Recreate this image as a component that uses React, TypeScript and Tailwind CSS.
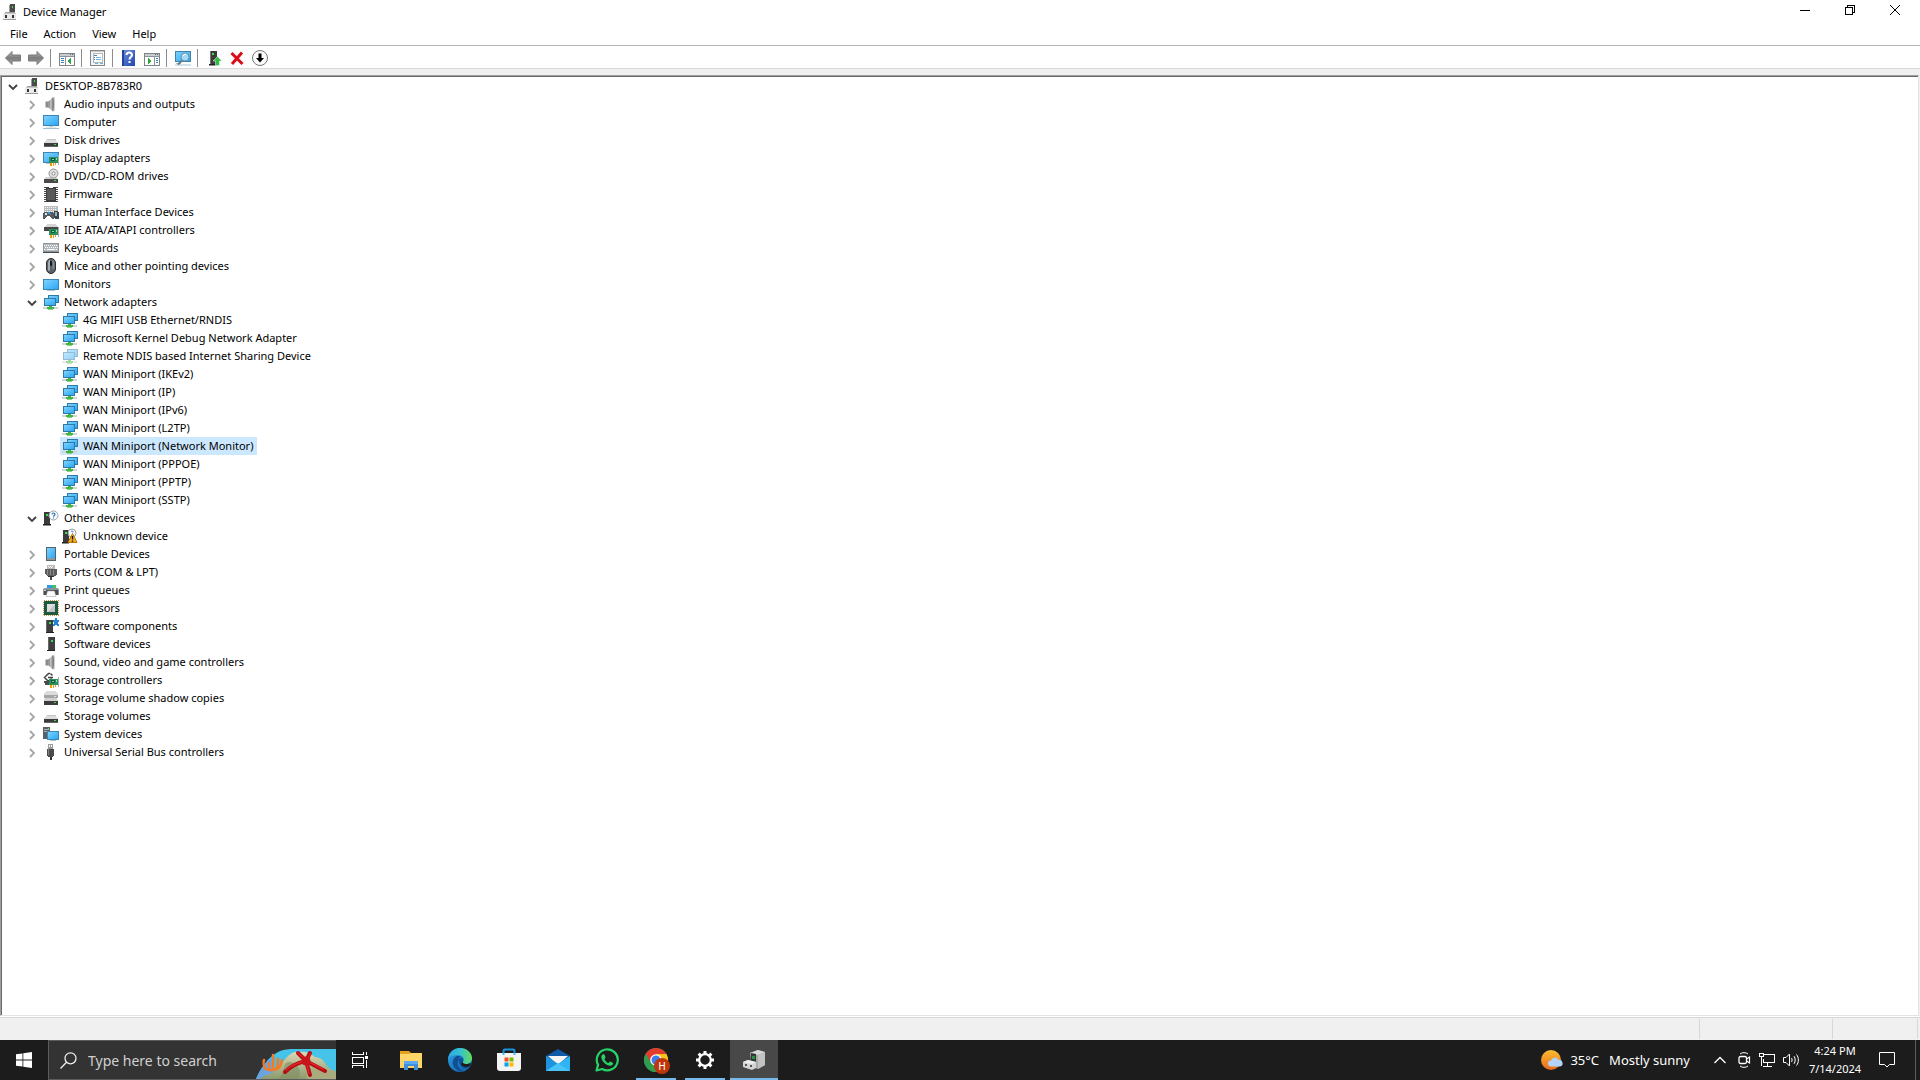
import React from 'react';

type IconProps = { children: React.ReactNode; size?: number; crisp?: boolean };

const Icon: React.FC<IconProps> = ({ children, size = 16, crisp }) => (
	<svg
		width={size}
		height={size}
		viewBox={`0 0 ${size} ${size}`}
		fill="none"
		shapeRendering={crisp ? 'crispEdges' : 'auto'}
		className="block shrink-0"
		aria-hidden="true"
	>
		{children}
	</svg>
);

/* Shared gradients, referenced by id from every icon */
const Gradients: React.FC = () => (
	<svg width="0" height="0" className="absolute" aria-hidden="true">
		<defs>
			<linearGradient id="screen" x1="0" y1="0" x2="1" y2="1">
				<stop offset="0" stopColor="#7fd2fe" />
				<stop offset="1" stopColor="#2ba8f5" />
			</linearGradient>
			<linearGradient id="metal" x1="0" y1="0" x2="1" y2="0">
				<stop offset="0" stopColor="#6f6f6f" />
				<stop offset="0.5" stopColor="#c9c9c9" />
				<stop offset="1" stopColor="#7a7a7a" />
			</linearGradient>
			<linearGradient id="arrow" x1="0" y1="0" x2="0" y2="1">
				<stop offset="0" stopColor="#b9b9b9" />
				<stop offset="0.5" stopColor="#7c7c7c" />
				<stop offset="1" stopColor="#a8a8a8" />
			</linearGradient>
			<linearGradient id="help" x1="0" y1="0" x2="1" y2="1">
				<stop offset="0" stopColor="#7090dc" />
				<stop offset="1" stopColor="#2347ad" />
			</linearGradient>
			<linearGradient id="edgeTop" x1="0" y1="0" x2="1" y2="0">
				<stop offset="0" stopColor="#2da6e0" />
				<stop offset="0.5" stopColor="#35c1d4" />
				<stop offset="1" stopColor="#66dc5c" />
			</linearGradient>
			<linearGradient id="edgeBody" x1="0" y1="0" x2="1" y2="1">
				<stop offset="0" stopColor="#2ea3e6" />
				<stop offset="1" stopColor="#0c59a4" />
			</linearGradient>
			<linearGradient id="sun" x1="0" y1="0" x2="0" y2="1">
				<stop offset="0" stopColor="#f9bd2f" />
				<stop offset="1" stopColor="#ea6a1f" />
			</linearGradient>
			<linearGradient id="rock" x1="0" y1="0" x2="0" y2="1">
				<stop offset="0" stopColor="#dcd9b4" />
				<stop offset="1" stopColor="#8d9a6c" />
			</linearGradient>
		</defs>
	</svg>
);

const Card: React.FC = () => (
	<>
		<rect x="6" y="7" width="9" height="6" fill="#2c8f5c" />
		<rect x="8" y="8" width="4" height="3" fill="#0f5a3b" />
		<rect x="9" y="9" width="2" height="1" fill="#7fd9a2" />
		<rect x="13" y="8" width="1" height="2" fill="#8fe6ae" />
		<rect x="15" y="5" width="1" height="10" fill="#a3adb2" />
		<path d="M7 13h2v3H7zM10 13h1v3h-1zM12 13h1v2h-1z" fill="#f09a1a" />
	</>
);

const Drive: React.FC = () => (
	<>
		<path d="M4 7h8l3 4H1z" fill="#dcdcdc" />
		<path d="M4 7h8l1 1H3z" fill="#c4c4c4" />
		<rect x="1" y="11" width="14" height="4" fill="#3c3c3c" />
		<rect x="1" y="14" width="14" height="1" fill="#666" />
		<rect x="11" y="12" width="2" height="1" fill="#35e045" />
	</>
);

const Tower: React.FC<{ x: number }> = ({ x }) => (
	<>
		<rect x={x} y="2" width="7" height="12" fill="#3f3f3f" />
		<rect x={x} y="2" width="1" height="12" fill="#686868" />
		<rect x={x + 3} y="4" width="2" height="2" fill="#36e14b" />
		<rect x={x} y="14" width="8" height="1" fill="#222" />
	</>
);

const DeviceManagerIcon = () => (
	<Icon crisp>
		<rect x="7" y="0" width="5" height="8" fill="#4a4a4a" />
		<rect x="6" y="1" width="1" height="7" fill="#9b9b9b" />
		<rect x="9" y="2" width="1" height="2" fill="#3fe052" />
		<path d="M2 8h10l1 2v6H0v-6z" fill="#c6c6c6" />
		<path d="M0 10h13v5H0z" fill="#ececec" />
		<path d="M2 11h2v3H2zM9 11h2v3H9z" fill="#333" />
		<path d="M0 15h13v1H0z" fill="#9b9b9b" />
		<path d="M2 8h10v1H2z" fill="#a2a2a2" />
	</Icon>
);

const SpeakerIcon = () => (
	<Icon>
		<path d="M2.500 5.500h3v6h-3z" fill="#8b8b8b" />
		<path d="M5.500 5.500L10 1v14.500l-4.500-4z" fill="url(#metal)" />
		<path d="M10 1c1.500 2 1.500 12 0 14.500z" fill="#5f5f5f" />
		<path d="M10.500 1l1 .5v13.500l-1 .5z" fill="#a7a7a7" />
	</Icon>
);

const ComputerIcon = () => (
	<Icon crisp>
		<rect x="0" y="1" width="16" height="11" fill="#3c86b4" />
		<rect x="1" y="2" width="14" height="9" fill="url(#screen)" />
		<rect x="6" y="12" width="4" height="1" fill="#c3d3dc" />
		<rect x="3" y="13" width="10" height="1" fill="#e3eaee" />
		<rect x="0" y="14" width="16" height="1" fill="#a3c0d0" />
	</Icon>
);

const DiskIcon = () => (
	<Icon crisp>
		<Drive />
	</Icon>
);

const DisplayIcon = () => (
	<Icon crisp>
		<rect x="0" y="2" width="16" height="11" fill="#3c86b4" />
		<rect x="1" y="3" width="14" height="9" fill="url(#screen)" />
		<rect x="3" y="13" width="4" height="1" fill="#b7c7cf" />
		<Card />
	</Icon>
);

const DvdIcon = () => (
	<Icon>
		<path d="M3 9h10l2 2.500H1z" fill="#d0d0d0" />
		<rect x="1" y="11" width="14" height="4" fill="#4a4a4a" />
		<rect x="11" y="12" width="2" height="1" fill="#35e045" />
		<circle cx="10.500" cy="5.500" r="4.500" fill="#dedede" stroke="#949494" />
		<circle cx="10.500" cy="5.500" r="1.500" fill="#fff" stroke="#8e8e8e" />
	</Icon>
);

const FirmwareIcon = () => (
	<Icon crisp>
		<rect x="3" y="1" width="10" height="15" fill="#3e3e3e" />
		<rect x="4" y="3" width="8" height="11" fill="#595959" />
		<rect x="6" y="1" width="4" height="1" fill="#fff" />
		<path d="M1 1.500h2M1 3.500h2M1 5.500h2M1 7.500h2M1 9.500h2M1 11.500h2M1 13.500h2M1 15.500h2" stroke="#4a4a4a" />
		<path d="M13 1.500h2M13 3.500h2M13 5.500h2M13 7.500h2M13 9.500h2M13 11.500h2M13 13.500h2M13 15.500h2" stroke="#4a4a4a" />
	</Icon>
);

const HidIcon = () => (
	<Icon crisp>
		<rect x="1" y="2" width="14" height="8" fill="#b9bdbf" />
		<path d="M2 3.500h12M2 5.500h12M2 7.500h12" stroke="#f6f6f6" strokeDasharray="1 1" />
		<path d="M1 8h8l2 1v6H9l-2-3H4l-2 3H0v-4z" fill="#545c63" />
		<path d="M2 9h2v2H2z" fill="#d9e6ec" />
		<path d="M5 8h2v2H5z" fill="#2c9ae6" />
		<path d="M7 10h1v1H7z" fill="#e25b3c" />
		<path d="M11 7h4l1 2v5l-1 1h-3l-1-1z" fill="#3b4650" />
		<path d="M12 8h2v4h-2z" fill="#9eb0bb" />
	</Icon>
);

const IdeIcon = () => (
	<Icon crisp>
		<path d="M4 2h8l3 3H1z" fill="#d5d5d5" />
		<rect x="1" y="5" width="14" height="4" fill="#474747" />
		<Card />
	</Icon>
);

const KeyboardIcon = () => (
	<Icon crisp>
		<rect x="0" y="3" width="16" height="10" fill="#8e979c" />
		<rect x="1" y="4" width="14" height="7" fill="#b4bbbf" />
		<path d="M1 5.500h14M2 7.500h13M1 9.500h2M13 9.500h2" stroke="#fff" strokeDasharray="1 1" />
		<path d="M4 9.500h8" stroke="#fff" />
		<rect x="0" y="12" width="16" height="1" fill="#454b4f" />
	</Icon>
);

const MouseIcon = () => (
	<Icon>
		<rect x="3.500" y="0.500" width="9" height="15" rx="4.500" fill="#5c6167" stroke="#2c2f33" />
		<path d="M5 6c0-3 1-4 2-4.500v11H5z" fill="#a3adb5" />
		<path d="M9.500 1.500c1.500 1 2 2 2 5v4l-2 1z" fill="#7f8990" />
		<rect x="7" y="3" width="2" height="5" rx="1" fill="#17191b" />
	</Icon>
);

const MonitorIcon = () => (
	<Icon crisp>
		<rect x="0" y="3" width="16" height="11" fill="#3c86b4" />
		<rect x="1" y="4" width="14" height="9" fill="url(#screen)" />
		<rect x="4" y="14" width="8" height="1" fill="#a9c3d1" />
	</Icon>
);

const NetworkIcon = () => (
	<Icon crisp>
		<rect x="5" y="1" width="11" height="8" fill="#2f79a8" />
		<rect x="6" y="2" width="9" height="6" fill="url(#screen)" />
		<rect x="1" y="4" width="12" height="8" fill="#2f79a8" />
		<rect x="2" y="5" width="10" height="6" fill="url(#screen)" />
		<rect x="0" y="13" width="15" height="2" fill="#d4d4d4" />
		<path d="M6 12h3v1h2v2H4v-2h2z" fill="#3fb544" />
		<rect x="5" y="15" width="5" height="1" fill="#8fd08f" />
	</Icon>
);

const OtherIcon = () => (
	<Icon>
		<path d="M1 2h6v12H1z" fill="#3b3b3b" />
		<path d="M1 14h7v1.500H0V14z" fill="#222" />
		<rect x="3" y="4" width="2" height="2" fill="#36e14b" />
		<circle cx="10.500" cy="5.500" r="4.500" fill="#fff" stroke="#9aa3a8" />
		<path d="M9 4.500c0-2 3-2 3 0 0 1-1.500 1-1.500 2.200M10.500 7.500v1" stroke="#2277c4" strokeWidth="1.200" />
	</Icon>
);

const UnknownIcon = () => (
	<Icon>
		<path d="M1 2h6v12H1z" fill="#3b3b3b" />
		<path d="M0 14h7v1.500H0z" fill="#222" />
		<rect x="3" y="4" width="2" height="2" fill="#36e14b" />
		<circle cx="10" cy="5" r="4" fill="#fff" stroke="#9aa3a8" />
		<path d="M9 3.500c1-1 2.500-.5 2 1" stroke="#2277c4" />
		<path d="M10.500 5.500L15 14.500H6z" fill="#f6ae22" stroke="#b57708" strokeLinejoin="round" />
		<path d="M10.500 8v3.500M10.500 12.500v1.200" stroke="#1f1500" strokeWidth="1.400" />
	</Icon>
);

const PortableIcon = () => (
	<Icon crisp>
		<rect x="3" y="1" width="10" height="14" fill="#55636c" />
		<rect x="4" y="2" width="8" height="10" fill="url(#screen)" />
		<rect x="4" y="12" width="8" height="2" fill="#8d979c" />
	</Icon>
);

const PortsIcon = () => (
	<Icon crisp>
		<path d="M4 1h8v4H4z" fill="#b9b9b9" />
		<path d="M5 2h1v1H5zM7 2h1v1H7zM9 2h1v1H9zM6 3h1v1H6zM8 3h1v1H8z" fill="#fff" />
		<path d="M2 5h12v5l-2 2H4l-2-2z" fill="#5d5d5d" />
		<path d="M4 6h1v5H4zM7 6h1v5H7zM10 6h1v5h-1z" fill="#8d8d8d" />
		<path d="M5 12h6v1H5z" fill="#2e2e2e" />
		<path d="M7 13h2v3H7z" fill="#4a4a4a" />
	</Icon>
);

const PrintIcon = () => (
	<Icon>
		<path d="M4 3h9v3H4z" fill="#2f9be6" />
		<path d="M9 3h4v3H9z" fill="#42bd69" />
		<path d="M2 6h12l2 1v6H0V7z" fill="#8b9399" />
		<path d="M1 8h14v5H1z" fill="#474d52" />
		<path d="M1 8h2v1H1z" fill="#cfd6da" />
		<path d="M4.500 9h7l1.500 5.500H3z" fill="#fafafa" stroke="#a0a0a0" strokeWidth="0.500" />
	</Icon>
);

const ProcessorIcon = () => (
	<Icon crisp>
		<rect x="0.500" y="0.500" width="15" height="15" stroke="#c09a3c" strokeDasharray="1 1" />
		<rect x="1" y="1" width="14" height="14" fill="#1d5a41" />
		<rect x="4" y="4" width="8" height="8" fill="#dedede" />
		<path d="M4 12l8-8v8z" fill="#c3c3c3" />
	</Icon>
);

const SoftwareComponentIcon = () => (
	<Icon crisp>
		<Tower x={3} />
		<path d="M10 2h2V0h2v2h2v2h-1v2h1v2h-2V7h-2v1h-2V6h1V4h-1z" fill="#2285d6" />
	</Icon>
);

const SoftwareDeviceIcon = () => (
	<Icon crisp>
		<rect x="5" y="1" width="7" height="13" fill="#3f3f3f" />
		<rect x="5" y="1" width="1" height="13" fill="#686868" />
		<rect x="8" y="4" width="2" height="2" fill="#36e14b" />
		<rect x="4" y="14" width="8" height="1" fill="#222" />
	</Icon>
);

const StorageControllerIcon = () => (
	<Icon crisp>
		<path d="M1 9h6v4H2z" fill="#4c4c4c" />
		<path d="M7 1.500H5.500L1.500 5.500l4 4 3-3M5 5.500h5M7.500 1.500l2 2" stroke="#444" strokeWidth="1.500" shapeRendering="auto" />
		<Card />
	</Icon>
);

const ShadowCopyIcon = () => (
	<Icon crisp>
		<path d="M3 1h10l2 3v3H1V4z" fill="#dcdcdc" />
		<path d="M1 5h14v3H1z" fill="#a6a6a6" />
		<path d="M2 8h12l1 3H1z" fill="#d0d0d0" />
		<rect x="1" y="11" width="14" height="4" fill="#3c3c3c" />
		<rect x="11" y="12" width="2" height="1" fill="#35e045" />
		<rect x="11" y="6" width="2" height="1" fill="#c3ecc7" />
	</Icon>
);

const SystemIcon = () => (
	<Icon crisp>
		<rect x="0" y="1" width="7" height="12" fill="#5a6166" />
		<path d="M1 3h5v1H1zM1 5h3v1H1z" fill="#aab2b7" />
		<rect x="5" y="2" width="1" height="1" fill="#36e14b" />
		<rect x="4" y="5" width="12" height="9" fill="#3c86b4" />
		<rect x="5" y="6" width="10" height="7" fill="url(#screen)" />
		<rect x="7" y="14" width="6" height="1" fill="#a9c3d1" />
	</Icon>
);

const UsbIcon = () => (
	<Icon crisp>
		<rect x="5" y="0" width="5" height="5" fill="#9b9b9b" />
		<path d="M6 1h1v2H6zM8 1h1v2H8z" fill="#fff" />
		<path d="M4 5h7v6l-1 2H5l-1-2z" fill="#4b4b4b" />
		<path d="M5 5h1v6H5z" fill="#838383" />
		<path d="M7 13h2v3H7z" fill="#2f2f2f" />
	</Icon>
);

/* Toolbar icons */
const BackIcon = () => (
	<Icon>
		<path d="M0.500 8L7 1.500V5h8.500v6H7v3.500z" fill="url(#arrow)" stroke="#777" strokeLinejoin="round" />
	</Icon>
);

const ForwardIcon = () => (
	<Icon>
		<path d="M15.500 8L9 1.500V5H.5v6H9v3.500z" fill="url(#arrow)" stroke="#777" strokeLinejoin="round" />
	</Icon>
);

const PaneIcon: React.FC<{ right?: boolean }> = ({ right }) => (
	<Icon crisp>
		<rect x="0.500" y="3.500" width="15" height="12" fill="#fff" stroke="#7d858b" />
		<rect x="1" y="4" width="14" height="2" fill="#c8cdd1" />
		<path d="M11 4h1v1h-1zM13 4h1v1h-1z" fill="#5a6268" />
		<path d="M1 6.500h14" stroke="#8b9298" />
		{right ? (
			<>
				<path d="M10.500 7v8" stroke="#8b9298" />
				<path d="M12 8.500h2M12 10.500h2M12 12.500h2" stroke="#3d7fb4" />
				<path d="M4 8l4 3-4 3z" fill="#30a63a" />
			</>
		) : (
			<>
				<path d="M6.500 7v8" stroke="#8b9298" />
				<path d="M2 8.500h3M2 10.500h3M2 12.500h3" stroke="#3d7fb4" />
				<path d="M12 8l-4 3 4 3z" fill="#30a63a" />
			</>
		)}
	</Icon>
);

const PropertiesIcon = () => (
	<Icon crisp>
		<rect x="0.500" y="0.500" width="14" height="15" fill="#f4f4f4" stroke="#858585" />
		<rect x="1" y="1" width="13" height="1" fill="#c9c9c9" />
		<rect x="3.500" y="3.500" width="9" height="9" fill="#fff" stroke="#b8b8b8" />
		<path d="M4 5.500h3" stroke="#4c7fa6" />
		<path d="M4 7.500h1M4 9.500h1" stroke="#2f8ad0" />
		<path d="M6 7.500h5M6 9.500h5" stroke="#6db6e6" />
		<path d="M5 13.500h3M10 13.500h3" stroke="#63b8e8" />
	</Icon>
);

const HelpIcon = () => (
	<Icon>
		<rect x="1" y="0" width="13" height="16" fill="url(#help)" />
		<rect x="1" y="0" width="2" height="16" fill="#24439a" />
		<path d="M5.500 5c0-3.500 5.500-3 5.500 0 0 2-2.500 2.200-2.500 4.500" stroke="#fff" strokeWidth="2" />
		<rect x="7.500" y="11" width="2" height="2" fill="#fff" />
	</Icon>
);

const ScanIcon = () => (
	<Icon>
		<rect x="0.500" y="1.500" width="15" height="10" fill="url(#screen)" stroke="#3f83ad" />
		<path d="M1 13.500h5M0 15h16" stroke="#a7c3d4" />
		<path d="M7.500 10L3 14.500" stroke="#607d8f" strokeWidth="2" />
		<circle cx="10" cy="7" r="4" fill="#a3dafa" stroke="#6f94a8" />
		<path d="M8 6c.5-1.500 2-2 3-1.500" stroke="#fff" />
	</Icon>
);

const UpdateDriverIcon = () => (
	<Icon>
		<path d="M4 1h7v13H4z" fill="#3b3b3b" />
		<path d="M4 1h1v13H4z" fill="#777" />
		<path d="M3 14h8v1.500H3z" fill="#222" />
		<rect x="6" y="3" width="2" height="2" fill="#36e14b" />
		<path d="M11.500 6.500L16 11h-2.500v4.500h-4V11H7z" fill="#2fc043" stroke="#fff" strokeWidth="0.500" />
	</Icon>
);

const UninstallIcon = () => (
	<Icon>
		<path d="M2.500 3l11 11M13 2.500L3 14" stroke="#dc0d18" strokeWidth="3" />
	</Icon>
);

const DisableIcon = () => (
	<Icon>
		<circle cx="8" cy="8" r="7.500" fill="#fafafa" stroke="#777" />
		<path d="M6.500 3.500h3V8H12l-4 4.500L4 8h2.500z" fill="#000" />
	</Icon>
);

const Chevron: React.FC<{ open?: boolean }> = ({ open }) =>
	open ? (
		<svg width="11" height="10" viewBox="0 0 11 10" fill="none" aria-hidden="true">
			<path d="M2 3l4 4 4-4" stroke="#404040" strokeWidth="1.800" />
		</svg>
	) : (
		<svg width="11" height="10" viewBox="0 0 11 10" fill="none" aria-hidden="true">
			<path d="M4 1l4 4-4 4" stroke="#a6a6a6" strokeWidth="1.800" />
		</svg>
	);

type Device = { name: string; icon?: React.FC; disabled?: boolean; selected?: boolean };
type Category = { name: string; icon: React.FC; devices?: Device[] };

const categories: Category[] = [
	{ name: 'Audio inputs and outputs', icon: SpeakerIcon },
	{ name: 'Computer', icon: ComputerIcon },
	{ name: 'Disk drives', icon: DiskIcon },
	{ name: 'Display adapters', icon: DisplayIcon },
	{ name: 'DVD/CD-ROM drives', icon: DvdIcon },
	{ name: 'Firmware', icon: FirmwareIcon },
	{ name: 'Human Interface Devices', icon: HidIcon },
	{ name: 'IDE ATA/ATAPI controllers', icon: IdeIcon },
	{ name: 'Keyboards', icon: KeyboardIcon },
	{ name: 'Mice and other pointing devices', icon: MouseIcon },
	{ name: 'Monitors', icon: MonitorIcon },
	{
		name: 'Network adapters',
		icon: NetworkIcon,
		devices: [
			{ name: '4G MIFI USB Ethernet/RNDIS' },
			{ name: 'Microsoft Kernel Debug Network Adapter' },
			{ name: 'Remote NDIS based Internet Sharing Device', disabled: true },
			{ name: 'WAN Miniport (IKEv2)' },
			{ name: 'WAN Miniport (IP)' },
			{ name: 'WAN Miniport (IPv6)' },
			{ name: 'WAN Miniport (L2TP)' },
			{ name: 'WAN Miniport (Network Monitor)', selected: true },
			{ name: 'WAN Miniport (PPPOE)' },
			{ name: 'WAN Miniport (PPTP)' },
			{ name: 'WAN Miniport (SSTP)' },
		],
	},
	{ name: 'Other devices', icon: OtherIcon, devices: [{ name: 'Unknown device', icon: UnknownIcon }] },
	{ name: 'Portable Devices', icon: PortableIcon },
	{ name: 'Ports (COM & LPT)', icon: PortsIcon },
	{ name: 'Print queues', icon: PrintIcon },
	{ name: 'Processors', icon: ProcessorIcon },
	{ name: 'Software components', icon: SoftwareComponentIcon },
	{ name: 'Software devices', icon: SoftwareDeviceIcon },
	{ name: 'Sound, video and game controllers', icon: SpeakerIcon },
	{ name: 'Storage controllers', icon: StorageControllerIcon },
	{ name: 'Storage volume shadow copies', icon: ShadowCopyIcon },
	{ name: 'Storage volumes', icon: DiskIcon },
	{ name: 'System devices', icon: SystemIcon },
	{ name: 'Universal Serial Bus controllers', icon: UsbIcon },
];

const TitleBar: React.FC = () => (
	<header className="flex h-[23px] items-start justify-between pr-0.5 pl-[3px]">
		<div className="flex h-full items-center gap-1">
			<DeviceManagerIcon />
			<h1>Device Manager</h1>
		</div>
		<div className="flex">
			<button aria-label="Minimize" className="flex h-5 w-[45px] items-center justify-center">
				<svg width="10" height="10" viewBox="0 0 10 10" shapeRendering="crispEdges">
					<path d="M0 5h10v1H0z" fill="#000" />
				</svg>
			</button>
			<button aria-label="Restore" className="flex h-5 w-[45px] items-center justify-center">
				<svg width="10" height="10" viewBox="0 0 10 10" fill="none" stroke="#000" shapeRendering="crispEdges">
					<path d="M0.500 2.500h7v7h-7zM2.500 2V.5h7v7H8" />
				</svg>
			</button>
			<button aria-label="Close" className="flex h-5 w-[46px] items-center justify-center">
				<svg width="10" height="10" viewBox="0 0 10 10" fill="none" stroke="#000">
					<path d="M0 0l10 10M10 0L0 10" />
				</svg>
			</button>
		</div>
	</header>
);

const MenuBar: React.FC = () => (
	<nav className="flex h-[22px] items-center gap-4 pl-2.5">
		<button>File</button>
		<button>Action</button>
		<button>View</button>
		<button>Help</button>
	</nav>
);

const ToolButton: React.FC<{ label: string; children: React.ReactNode }> = ({ label, children }) => (
	<button aria-label={label} className="flex h-5 w-[23px] items-center justify-center">
		{children}
	</button>
);

const Separator: React.FC = () => <div className="mr-1 ml-[3px] h-[18px] w-px bg-[#8c8c8c]" />;

const ToolBar: React.FC = () => (
	<div className="flex h-6 items-center border-y border-t-[#b4b4bb] border-b-[#d9d9d9] pt-0.5 pl-px">
		<ToolButton label="Back"><BackIcon /></ToolButton>
		<ToolButton label="Forward"><ForwardIcon /></ToolButton>
		<Separator />
		<ToolButton label="Show/Hide Console Tree"><PaneIcon /></ToolButton>
		<Separator />
		<ToolButton label="Properties"><PropertiesIcon /></ToolButton>
		<Separator />
		<ToolButton label="Help"><HelpIcon /></ToolButton>
		<ToolButton label="Show/Hide Action Pane"><PaneIcon right /></ToolButton>
		<Separator />
		<ToolButton label="Scan for hardware changes"><ScanIcon /></ToolButton>
		<Separator />
		<ToolButton label="Update driver"><UpdateDriverIcon /></ToolButton>
		<ToolButton label="Uninstall device"><UninstallIcon /></ToolButton>
		<ToolButton label="Disable device"><DisableIcon /></ToolButton>
	</div>
);

const DeviceRow: React.FC<{ device: Device }> = ({ device }) => {
	const DeviceIcon = device.icon ?? NetworkIcon;
	return (
		<li role="treeitem" aria-selected={!!device.selected} className="flex h-[18px] pl-[58px]">
			<span className={device.selected ? 'flex items-center gap-[5px] bg-[#cce8ff] pr-1 pl-0.5' : 'flex items-center gap-[5px] pr-1 pl-0.5'}>
				<span className={device.disabled ? 'opacity-50' : ''}><DeviceIcon /></span>
				<span>{device.name}</span>
			</span>
		</li>
	);
};

const CategoryRow: React.FC<{ category: Category }> = ({ category }) => {
	const open = !!category.devices;
	return (
		<li role="treeitem" aria-expanded={open}>
			<div className="flex h-[18px] items-center pl-6">
				<button aria-label={open ? 'Collapse' : 'Expand'} className="flex h-[18px] w-[17px] items-center pt-0.5"><Chevron open={open} /></button>
				<category.icon />
				<span className="pl-[5px]">{category.name}</span>
			</div>
			{category.devices && (
				<ul role="group">
					{category.devices.map((device) => <DeviceRow key={device.name} device={device} />)}
				</ul>
			)}
		</li>
	);
};

const DeviceTree: React.FC = () => (
	<main className="flex min-h-0 flex-1 flex-col bg-[#f0f0f0] pt-1.5 pr-px">
		<div className="flex-1 border border-t-[#a0a0a0] border-r-[#e3e3e3] border-b-[#e3e3e3] border-l-[#a0a0a0] bg-white">
			<ul role="tree" className="h-full border-t border-l border-[#696969]">
				<li role="treeitem" aria-expanded="true">
					<div className="flex h-[18px] items-center pl-[5px]">
						<button aria-label="Collapse" className="flex h-[18px] w-[18px] items-center pt-0.5"><Chevron open /></button>
						<DeviceManagerIcon />
						<span className="pl-1">DESKTOP-8B783R0</span>
					</div>
					<ul role="group">
						{categories.map((category) => <CategoryRow key={category.name} category={category} />)}
					</ul>
				</li>
			</ul>
		</div>
	</main>
);

const StatusBar: React.FC = () => (
	<div className="mt-px flex h-[23px] justify-end border-t border-[#d7d7d7] bg-[#f0f0f0] py-px pr-0.5">
		<div className="w-[133px] border-l border-[#d7d7d7]" />
		<div className="w-[86px] border-x border-[#d7d7d7]" />
	</div>
);

const ReefArt: React.FC = () => (
	<svg width="80" height="30" viewBox="0 0 80 30" fill="none" aria-hidden="true">
		<path d="M0 30C4 20 12 8 22 3 28 0 34 0 38 0h42v30z" fill="#45c3e8" />
		<path d="M0 30C4 20 10 12 18 7l-2 23z" fill="#6aa3dd" />
		<path d="M4 30c6-5 12-5 17-9 5-6 10-16 18-18 12-1 14 1 20 5 8 1 9 5 13 10 2 2 4 3 8 4v8z" fill="url(#rock)" />
		<path d="M30 14c6-3 10 1 12 4s3 7 0 12H22c6-4 4-10 8-16z" fill="#7f8d62" opacity="0.600" />
		<path d="M52 22c6-2 16-2 28 2v6H50z" fill="#a9ab7e" />
		<path d="M10 20c-2-2-3-6-2-9M13 21V14M17 21c0-6 1-10 0-15M20 20c2-3 2-7 2-10M22 19c3-1 3-4 4-8M10 20c4 2 8 2 13-1" stroke="#f47a25" strokeWidth="2.500" strokeLinecap="round" />
		<path d="M50 12L42 4M50 12l4-8M50 12l19 10M50 12l4 14M50 12c-10 2-15 5-21 11" stroke="#b50d14" strokeWidth="4" strokeLinecap="round" />
		<path d="M50 11L42 4M51 11l3-6M51 12l16 8M50 12l3 12M49 12c-9 2-14 5-19 9" stroke="#df2424" strokeWidth="1.500" strokeLinecap="round" />
		<circle cx="50" cy="12" r="4.500" fill="#c8141a" />
	</svg>
);

const ExplorerIcon = () => (
	<svg width="24" height="24" viewBox="0 0 24 24" aria-hidden="true">
		<path d="M1 3h9l2 2h11v15H1z" fill="#e5a11c" />
		<path d="M1 6h9l2-1h11v15H1z" fill="#fdd568" />
		<path d="M5 14q0-1 1-1h12q1 0 1 1v8h-4v-4H9v4H5z" fill="#3f8edb" />
		<path d="M5 14q0-1 1-1h12q1 0 1 1v2H5z" fill="#5eaaf0" />
	</svg>
);

const EdgeIcon = () => (
	<svg width="24" height="24" viewBox="0 0 24 24" aria-hidden="true">
		<circle cx="12" cy="12" r="12" fill="url(#edgeBody)" />
		<path d="M0 11C1 4 6 0 12 0c7 0 12 5 12 10 0 4-3 6-6 6-2 0-4-1-3-2 2-3 0-7-5-7-4 0-8 1-10 4z" fill="url(#edgeTop)" />
		<path d="M9 8c-5 2-6 9-1 13 2 2 5 3 8 2-4-1-7-5-6-9 0-2 1-3 2-4 2-1 4 1 3 4-1 1 1 2 3 2-1 3 1 4 4 3l1-1c-4 4-11 2-12-4-1-3 0-5 2-6z" fill="#124f92" />
		<path d="M14 14c1 2 4 3 9 1l-1 3c-3 2-8 1-9-2z" fill="#1c1c1c" />
	</svg>
);

const StoreIcon = () => (
	<svg width="24" height="24" viewBox="0 0 24 24" aria-hidden="true">
		<path d="M6.500 7V3q0-1.500 1.500-1.500h8q1.500 0 1.500 1.500v4" fill="none" stroke="#1d93dd" strokeWidth="2" />
		<path d="M0 5h24v15q0 3-3 3H3q-3 0-3-3z" fill="#f4f4f4" />
		<path d="M6.500 5v2M17.500 5v2" stroke="#42b8f2" strokeWidth="2" />
		<path d="M7.500 9.500h4v4h-4z" fill="#f25022" />
		<path d="M12.500 9.500h4v4h-4z" fill="#7fba00" />
		<path d="M7.500 14.500h4v4h-4z" fill="#00a4ef" />
		<path d="M12.500 14.500h4v4h-4z" fill="#ffb900" />
	</svg>
);

const MailIcon = () => (
	<svg width="24" height="24" viewBox="0 0 24 24" aria-hidden="true">
		<path d="M0 8l12-7 12 7v4H0z" fill="#0f5ba8" />
		<path d="M2 8h20l-10 9z" fill="#f5f5f5" />
		<path d="M0 8l12 8 12-8v15H0z" fill="#2fb4f3" />
		<path d="M0 8l12 8-12 7z" fill="#1d93df" />
		<path d="M0 23l12-8 12 8z" fill="#48c4f8" />
	</svg>
);

const WhatsAppIcon = () => (
	<svg width="24" height="24" viewBox="0 0 24 24" fill="none" aria-hidden="true">
		<path d="M1.500 22.500l1.600-5.600A10.500 10.500 0 1 1 7.200 21z" stroke="#25d366" strokeWidth="2.200" strokeLinejoin="round" />
		<path d="M8.300 6.200c-.8 0-2 1-2 2.700 0 4 5 8.800 9 8.800 1.500 0 2.800-1.200 2.800-2.400 0-.6-2.500-1.800-3-1.800-.6 0-1 1.500-1.600 1.500-1 0-4-2.600-4-3.800 0-.5 1-1 1-1.600 0-.5-1-3.200-1.300-3.300z" fill="#25d366" />
	</svg>
);

const ChromeIcon = () => (
	<svg width="28" height="28" viewBox="0 0 28 28" aria-hidden="true">
		<g transform="translate(2 2)">
			<circle cx="12" cy="12" r="12" fill="#2f9e4f" />
			<path d="M12 12L1.600 6A12 12 0 0 1 22.400 6z" fill="#e33b2e" />
			<path d="M12 12V6h10.400A12 12 0 0 1 12 24l5-9z" fill="#fbc116" />
			<path d="M1.600 6L7 15l5-3V6z" fill="#e33b2e" />
			<path d="M1.600 6A12 12 0 0 0 12 24l5-9H7z" fill="#2f9e4f" />
			<circle cx="12" cy="12" r="5.800" fill="#fff" />
			<circle cx="12" cy="12" r="4.500" fill="#3b7ded" />
			<circle cx="18" cy="18" r="8" fill="#bf360c" />
			<text x="18" y="22" textAnchor="middle" fontSize="10" fill="#fff" fontFamily="Roboto, sans-serif">H</text>
		</g>
	</svg>
);

const SettingsIcon = () => (
	<svg width="20" height="20" viewBox="0 0 20 20" fill="none" stroke="#fff" aria-hidden="true">
		<circle cx="10" cy="10" r="5.800" strokeWidth="2.200" />
		<path d="M10 1v3M10 16v3M1 10h3M16 10h3M3.600 3.600l2.200 2.200M14.200 14.200l2.200 2.200M3.600 16.400l2.200-2.200M14.200 5.800l2.200-2.200" strokeWidth="3" />
	</svg>
);

const DeviceTaskIcon = () => (
	<svg width="24" height="24" viewBox="0 0 24 24" aria-hidden="true">
		<path d="M8 5l8-3 7 2v13l-7 4-6-2z" fill="#a9a9a9" />
		<path d="M8 5l8-3 7 2-7 3z" fill="#d8d8d8" />
		<path d="M16 7l7-3v13l-7 4z" fill="#c2c2c2" />
		<path d="M9 5l5 1v9l-5-1z" fill="#303a34" />
		<path d="M10 8h3v3h-3z" fill="#2c8e43" />
		<path d="M1 14l5-2 8 2v6l-4 2-9-3z" fill="#d4d4d4" />
		<path d="M1 14l5-2 8 2-4 2z" fill="#efefef" />
		<path d="M3 16h2v2H3zM8 17h2v2H8z" fill="#555" />
	</svg>
);

type TaskProps = { label: string; running?: boolean; active?: boolean; children: React.ReactNode };

const Task: React.FC<TaskProps> = ({ label, running, active, children }) => (
	<button
		aria-label={label}
		className={active ? 'relative flex h-10 w-12 items-center justify-center bg-[#484848]' : 'relative flex h-10 w-12 items-center justify-center'}
	>
		{children}
		{running && <span className="absolute inset-x-1 bottom-0 h-0.5 bg-[#76b9ed]" />}
		{active && <span className="absolute inset-x-0 bottom-0 h-0.5 bg-[#76b9ed]" />}
	</button>
);

const Taskbar: React.FC = () => (
	<footer className="flex h-10 items-center justify-between bg-[#1c1c1c] text-white">
		<div className="flex items-center">
			<button aria-label="Start" className="flex h-10 w-12 items-center justify-center">
				<Icon>
					<path d="M0 2.300L6.500 1.400V7.600H0zM7.300 1.300L16 0v7.600H7.300zM0 8.400h6.500v6.200L0 13.700zM7.300 8.400H16V16l-8.700-1.300z" fill="#fff" />
				</Icon>
			</button>
			<label className="flex h-10 w-72 items-center justify-between border border-r-0 border-[#5c5c5c] bg-[#333] pl-[11px]">
				<svg width="17" height="17" viewBox="0 0 17 17" fill="none" stroke="#eee" strokeWidth="1.300" className="shrink-0" aria-hidden="true">
					<circle cx="10.500" cy="6.300" r="5.500" />
					<path d="M6.500 10.300L0.500 16.500" />
				</svg>
				<input
					type="text"
					aria-label="Search"
					placeholder="Type here to search"
					className="w-0 min-w-0 flex-1 bg-transparent pt-0.5 pl-[11px] text-[14px] leading-5 placeholder:text-[#d0d0d0] placeholder:opacity-100 focus:outline-none"
				/>
				<span className="self-end"><ReefArt /></span>
			</label>
			<div className="flex gap-px">
				<Task label="Task View">
					<svg width="17" height="16" viewBox="0 0 17 16" fill="none" stroke="#fff" shapeRendering="crispEdges" aria-hidden="true">
						<path d="M0.500 0v2.500h11V0M0.500 5.500h11v6h-11zM0.500 16v-2.500h11V16M14.500 0v3M14.500 8v8" />
						<path d="M13 4h3v3h-3z" fill="#fff" stroke="none" />
					</svg>
				</Task>
				<span className="w-px" />
				<Task label="File Explorer"><ExplorerIcon /></Task>
				<Task label="Microsoft Edge"><EdgeIcon /></Task>
				<Task label="Microsoft Store"><StoreIcon /></Task>
				<Task label="Mail"><MailIcon /></Task>
				<Task label="WhatsApp"><WhatsAppIcon /></Task>
				<Task label="Google Chrome" running><ChromeIcon /></Task>
				<Task label="Settings" running><SettingsIcon /></Task>
				<Task label="Device Manager" active><DeviceTaskIcon /></Task>
			</div>
		</div>
		<div className="flex items-center">
			<button className="flex items-center text-[13px] leading-5">
				<svg width="24" height="22" viewBox="0 0 24 22" aria-hidden="true">
					<circle cx="11" cy="11" r="10" fill="url(#sun)" />
					<path d="M11 17.500a3 3 0 0 1 0-6 4 4 0 0 1 7.500-.5 3.300 3.300 0 0 1 1.500 6.500z" fill="#b4d3fb" />
				</svg>
				<span className="pl-1.5">35°C</span>
				<span className="pl-2.5">Mostly sunny</span>
			</button>
			<button aria-label="Show hidden icons" className="ml-6">
				<svg width="12" height="8" viewBox="0 0 12 8" fill="none" stroke="#fff" strokeWidth="1.300" aria-hidden="true">
					<path d="M0.500 7L6 1.500 11.500 7" />
				</svg>
			</button>
			<button aria-label="Meet Now" className="ml-3">
				<svg width="13" height="16" viewBox="0 0 13 16" fill="none" stroke="#fff" aria-hidden="true">
					<path d="M2 2c2-1.800 6-1.800 8 0M2 14c2 1.800 6 1.800 8 0" />
					<rect x="1" y="4.500" width="7.500" height="7" rx="1.500" strokeWidth="1.300" />
					<path d="M8.500 7l3-2v6l-3-2" strokeWidth="1.200" />
				</svg>
			</button>
			<button aria-label="Network" className="ml-2">
				<svg width="16" height="16" viewBox="0 0 16 16" fill="none" stroke="#fff" shapeRendering="crispEdges" aria-hidden="true">
					<path d="M5 2.500h10.500v8H4.500V7M8.500 11v3M4 14.500h9M0.500 1.500h4v3h-4zM2.500 5v9" />
				</svg>
			</button>
			<button aria-label="Volume" className="ml-2">
				<svg width="17" height="16" viewBox="0 0 17 16" fill="none" stroke="#fff" aria-hidden="true">
					<path d="M0.500 5.500H3L6.500 2v12L3 10.500H.5zM8.500 6c.8 1.200.8 2.800 0 4M11 4.200c1.600 2.200 1.600 5.400 0 7.600M13.500 2.500c2.500 3.200 2.500 7.800 0 11" />
				</svg>
			</button>
			<button className="ml-[3px] flex w-16 flex-col items-center text-[11px] leading-[18px]">
				<span>4:24 PM</span>
				<span>7/14/2024</span>
			</button>
			<button aria-label="Notifications" className="ml-3">
				<svg width="16" height="16" viewBox="0 0 16 16" fill="none" stroke="#fff" aria-hidden="true">
					<path d="M0.500 0.500h15v12h-5L8 15l-2.500-2.500h-5z" />
				</svg>
			</button>
			<button aria-label="Show desktop" className="ml-5 h-10 w-[5px] border-l border-[#5c5c5c]" />
		</div>
	</footer>
);

const App: React.FC = () => {
	return (
		<div className="flex h-screen flex-col bg-white font-['Noto_Sans','Open_Sans',sans-serif] text-[11px] leading-[18px] text-black">
			<Gradients />
			<TitleBar />
			<MenuBar />
			<ToolBar />
			<DeviceTree />
			<StatusBar />
			<Taskbar />
		</div>
	);
};

export default App;
